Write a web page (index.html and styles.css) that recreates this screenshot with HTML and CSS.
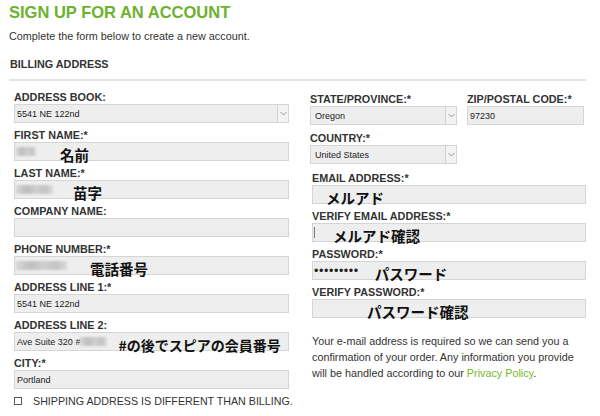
FILE: index.html
```html
<!DOCTYPE html>
<html lang="en">
<head>
<meta charset="utf-8">
<title>Sign up for an account</title>
<link rel="stylesheet" href="styles.css">
</head>
<body>
<div class="page">
  <h1 class="title">SIGN UP FOR AN ACCOUNT</h1>
  <p class="intro">Complete the form below to create a new account.</p>
  <h2 class="section">BILLING ADDRESS</h2>
  <div class="rule"></div>

  <div class="cols">
    <div class="col col-left">
      <div class="field">
        <div class="label">ADDRESS BOOK:</div>
        <div class="box select"><span class="val">5541 NE 122nd</span><span class="arrow"><svg width="7" height="5" viewBox="0 0 7 5"><polyline points="0.5,1 3.5,4 6.5,1" fill="none" stroke="#9a9a9a" stroke-width="1"/></svg></span></div>
      </div>
      <div class="field">
        <div class="label">FIRST NAME:*</div>
        <div class="box"><span class="blur w20"></span><span class="note m24">名前</span></div>
      </div>
      <div class="field">
        <div class="label">LAST NAME:*</div>
        <div class="box"><span class="blur w37"></span><span class="note m20">苗字</span></div>
      </div>
      <div class="field">
        <div class="label">COMPANY NAME:</div>
        <div class="box"></div>
      </div>
      <div class="field">
        <div class="label">PHONE NUMBER:*</div>
        <div class="box"><span class="blur w51"></span><span class="note m23">電話番号</span></div>
      </div>
      <div class="field">
        <div class="label">ADDRESS LINE 1:*</div>
        <div class="box"><span class="val">5541 NE 122nd</span></div>
      </div>
      <div class="field">
        <div class="label">ADDRESS LINE 2:</div>
        <div class="box"><span class="val">Ave Suite 320 #</span><span class="blur w27"></span><span class="note m11">#の後でスピアの会員番号</span></div>
      </div>
      <div class="field">
        <div class="label">CITY:*</div>
        <div class="box"><span class="val">Portland</span></div>
      </div>
      <label class="check"><span class="checkbox"></span>SHIPPING ADDRESS IS DIFFERENT THAN BILLING.</label>
    </div>

    <div class="col col-right">
      <div class="pair">
        <div class="field wide">
          <div class="label">STATE/PROVINCE:*</div>
          <div class="box select"><span class="val pad4">Oregon</span><span class="arrow"><svg width="7" height="5" viewBox="0 0 7 5"><polyline points="0.5,1 3.5,4 6.5,1" fill="none" stroke="#9a9a9a" stroke-width="1"/></svg></span></div>
        </div>
        <div class="field wide">
          <div class="label">ZIP/POSTAL CODE:*</div>
          <div class="box"><span class="val">97230</span></div>
        </div>
      </div>
      <div class="field wide country">
        <div class="label">COUNTRY:*</div>
        <div class="box select"><span class="val pad4">United States</span><span class="arrow"><svg width="7" height="5" viewBox="0 0 7 5"><polyline points="0.5,1 3.5,4 6.5,1" fill="none" stroke="#9a9a9a" stroke-width="1"/></svg></span></div>
      </div>
      <div class="email-group">
        <div class="field">
          <div class="label">EMAIL ADDRESS:*</div>
          <div class="box"><span class="note m13">メルアド</span></div>
        </div>
        <div class="field">
          <div class="label">VERIFY EMAIL ADDRESS:*</div>
          <div class="box"><span class="cursor"></span><span class="note m18">メルアド確認</span></div>
        </div>
        <div class="field">
          <div class="label">PASSWORD:*</div>
          <div class="box"><span class="dots">•••••••••</span><span class="note m16">パスワード</span></div>
        </div>
        <div class="field">
          <div class="label">VERIFY PASSWORD:*</div>
          <div class="box"><span class="note m54">パスワード確認</span></div>
        </div>
      </div>
      <p class="notice"><span class="line">Your e-mail address is required so we can send you a</span><span class="line">confirmation of your order. Any information you provide</span><span class="line">will be handled according to our <a class="link" href="#">Privacy Policy</a>.</span></p>
    </div>
  </div>
</div>
</body>
</html>
```
FILE: styles.css
```css
html, body {
  margin: 0;
  padding: 0;
  background: #ffffff;
}

body {
  font-family: "Liberation Sans", Arial, sans-serif;
  color: #333333;
}

.page {
  padding: 2px 0 0 9px;
  width: 577px;
}

.title {
  margin: 0;
  font-size: 16.5px;
  line-height: 20px;
  font-weight: bold;
  color: #6db22f;
}

.intro {
  margin: 6px 0 0;
  font-size: 10.8px;
  line-height: 16px;
}

.section {
  margin: 13px 0 0 1px;
  font-size: 10.8px;
  line-height: 14px;
  font-weight: bold;
}

.rule {
  margin-top: 8px;
  height: 2px;
  background: #e3e3e3;
}

.cols {
  display: grid;
  grid-template-columns: 275px 276px;
  column-gap: 21px;
  padding-left: 5px;
  margin-top: 9px;
}

.field {
  margin-bottom: 5px;
}

.label {
  font-size: 10.8px;
  line-height: 14px;
  font-weight: bold;
  color: #333333;
  white-space: nowrap;
}

.box {
  height: 19px;
  box-sizing: border-box;
  border: 1px solid #d5d5d5;
  background: #eeeeee;
  display: flex;
  align-items: center;
  font-size: 9px;
  color: #222222;
  white-space: nowrap;
}

.val {
  padding-left: 2px;
  flex-shrink: 0;
}

.val.pad4 {
  padding-left: 4px;
}

.select {
  justify-content: space-between;
}

.arrow {
  width: 11px;
  height: 17px;
  box-sizing: border-box;
  border-left: 1px solid #d0d0d0;
  background: #f3f3f3;
  display: flex;
  align-items: center;
  justify-content: center;
}

.blur {
  flex-shrink: 0;
  height: 9px;
  margin-left: 1px;
  background: linear-gradient(90deg, #d6d6d6 0%, #bfbfbf 30%, #cfcfcf 55%, #c4c4c4 80%, #dcdcdc 100%);
  filter: blur(0.8px);
}

.w20 { width: 20px; }
.w27 { width: 27px; margin-left: 0; }
.w37 { width: 37px; }
.w51 { width: 51px; }

.note {
  flex-shrink: 0;
  font-family: "Noto Sans CJK JP", "Noto Sans", sans-serif;
  font-size: 14.5px;
  font-weight: bold;
  line-height: 16px;
  color: #111111;
  position: relative;
  top: 3px;
}

.m11 { margin-left: 11px; font-size: 14px; }
.m13 { margin-left: 13px; }
.m16 { margin-left: 16px; }
.m18 { margin-left: 18px; }
.m20 { margin-left: 20px; }
.m23 { margin-left: 23px; }
.m24 { margin-left: 24px; }
.m54 { margin-left: 54px; }

.cursor {
  width: 1px;
  height: 11px;
  margin-left: 1px;
  background: #777777;
}

.dots {
  font-size: 12.5px;
  letter-spacing: 0.6px;
  color: #222222;
  margin-left: 1px;
}

.check {
  display: flex;
  align-items: center;
  margin-top: 4px;
  font-size: 10.7px;
  line-height: 14px;
  color: #333333;
  white-space: nowrap;
}

.checkbox {
  width: 8px;
  height: 8px;
  box-sizing: border-box;
  border: 1px solid #555555;
  margin-right: 11px;
  flex-shrink: 0;
}

.col-right {
  padding-top: 2px;
}

.pair {
  display: grid;
  grid-template-columns: 147px 117px;
  column-gap: 10px;
}

.wide {
  margin-bottom: 6px;
}

.country {
  width: 147px;
}

.email-group {
  margin-top: 7px;
  padding-left: 2px;
}

.notice {
  margin: 15px 0 0 2px;
  font-size: 10.8px;
  line-height: 16px;
  color: #333333;
}

.line {
  display: block;
  white-space: nowrap;
}

.link {
  color: #7ab62a;
  text-decoration: none;
}
```
